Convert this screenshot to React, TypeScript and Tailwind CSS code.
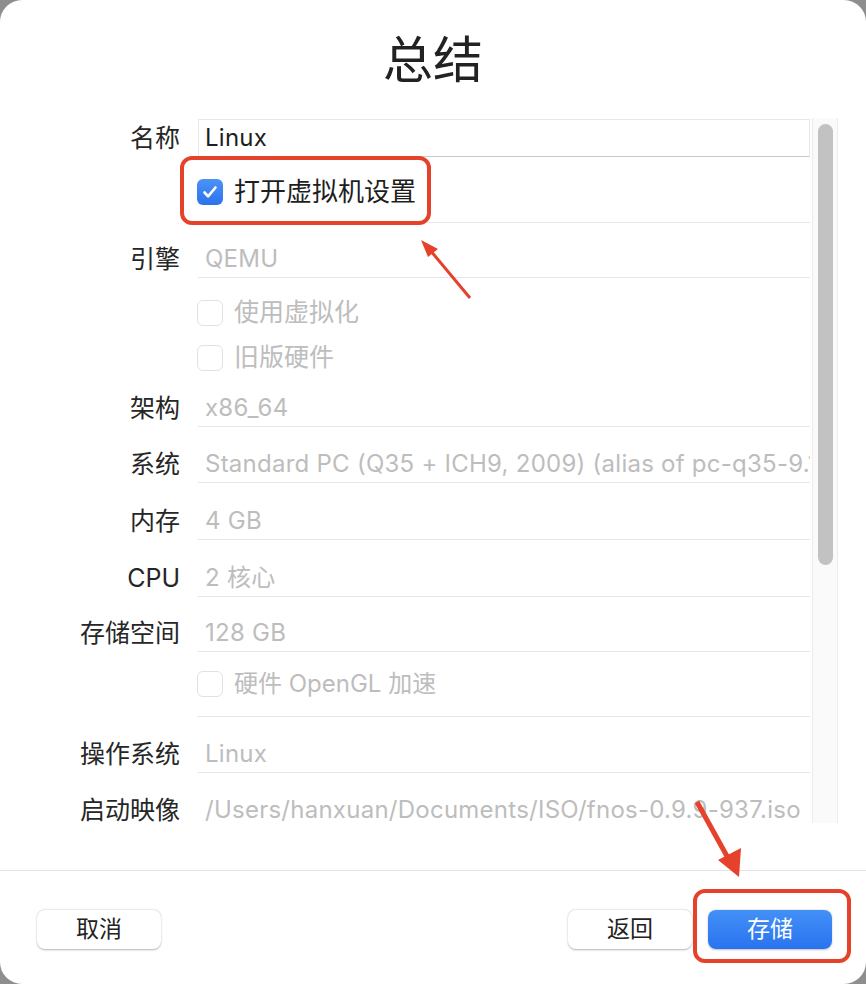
import React from "react";

const font = { fontFamily: 'Inter, "Noto Sans CJK SC", sans-serif' };

function Label({ children }: { children: React.ReactNode }) {
  return (
    <div className="w-[180px] shrink-0 text-right text-[25px] leading-none text-[#262626]">
      {children}
    </div>
  );
}

function FieldRow({ label, value, mt = "mt-[18px]" }: { label: string; value: string; mt?: string }) {
  return (
    <div className={`shrink-0 flex items-center ${mt}`}>
      <Label>{label}</Label>
      <div className="ml-[18px] w-[612px] h-[38px] border-b border-[#e6e6e6] flex items-center pl-[7px] overflow-hidden">
        <span className="text-[24px] leading-none tracking-[0.25px] text-[#bdbdbd] whitespace-nowrap">{value}</span>
      </div>
    </div>
  );
}

function EmptyBox() {
  return <div className="w-[26px] h-[26px] rounded-[6px] border border-[#e2e2e2] bg-white shrink-0" />;
}

function CheckRow({ text }: { text: string }) {
  return (
    <div className="shrink-0 flex items-center h-[45px]">
      <div className="w-[180px] shrink-0" />
      <div className="ml-[17px] flex items-center gap-[11px]">
        <EmptyBox />
        <span className="text-[25px] leading-none text-[#bdbdbd] whitespace-nowrap">{text}</span>
      </div>
    </div>
  );
}

export default function App() {
  return (
    <div className="w-[866px] h-[984px] bg-[#8e8e8e]" style={font}>
      <div className="relative w-[866px] h-[984px] bg-white rounded-[22px] flex flex-col overflow-hidden">
        {/* Title */}
        <div className="shrink-0 h-[118px] flex items-start justify-center pt-[30px]">
          <h1 className="text-[50px] leading-[60px] text-[#222]">总结</h1>
        </div>

        {/* Scroll region */}
        <div className="shrink-0 h-[705px] flex overflow-hidden">
          <div className="w-[810px] shrink-0 flex flex-col">
            {/* Name */}
            <div className="shrink-0 flex items-center mt-[1px]">
              <Label>名称</Label>
              <div className="ml-[18px] w-[612px] h-[38px] border border-[#e8e8e8] border-b-[#c9c9c9] flex items-center pl-[6px]">
                <span className="text-[24px] leading-none tracking-[0.25px] text-[#1e1e1e]">Linux</span>
              </div>
            </div>
            {/* Checked row */}
            <div className="shrink-0 flex items-center h-[66px] pt-[5px] border-b border-[#e6e6e6] ml-[198px]">
              <div className="-ml-[1px] flex items-center gap-[11px]">
                <div className="w-[26px] h-[26px] rounded-[6px] bg-gradient-to-b from-[#4b92f8] to-[#2b72ee] flex items-center justify-center">
                  <svg width="20" height="20" viewBox="0 0 20 20" fill="none">
                    <path d="M4.5 10.5l3.6 3.8L15.5 5.5" stroke="white" strokeWidth="2.6" strokeLinecap="round" strokeLinejoin="round" />
                  </svg>
                </div>
                <span className="text-[26px] leading-none text-[#1e1e1e]">打开虚拟机设置</span>
              </div>
            </div>
            <FieldRow label="引擎" value="QEMU" mt="mt-[17px]" />
            <div className="shrink-0 pt-[12px]">
              <CheckRow text="使用虚拟化" />
              <CheckRow text="旧版硬件" />
            </div>
            <FieldRow label="架构" value="x86_64" mt="mt-[9px]" />
            <FieldRow label="系统" value="Standard PC (Q35 + ICH9, 2009) (alias of pc-q35-9.1)" />
            <FieldRow label="内存" value="4 GB" mt="mt-[19px]" />
            <FieldRow label="CPU" value="2 核心" mt="mt-[19px]" />
            <FieldRow label="存储空间" value="128 GB" mt="mt-[17px]" />
            <div className="shrink-0 flex items-center h-[65px] border-b border-[#e6e6e6] ml-[197px]">
              <div className="flex items-center gap-[11px]">
                <EmptyBox />
                <span className="text-[24px] leading-none text-[#bdbdbd] whitespace-nowrap">硬件 OpenGL 加速</span>
              </div>
            </div>
            <FieldRow label="操作系统" value="Linux" />
            <FieldRow label="启动映像" value="/Users/hanxuan/Documents/ISO/fnos-0.9.9-937.iso" />
          </div>
          {/* Scrollbar */}
          <div className="ml-[2px] w-[26px] h-full bg-[#fafafa] border-x border-[#ececec] flex justify-center pt-[6px]">
            <div className="w-[15px] h-[441px] rounded-full bg-[#c2c2c2]" />
          </div>
        </div>

        {/* Footer */}
        <div className="mt-[47px] border-t border-[#e4e4e4] flex-1 flex items-start pt-[39px] pr-[34px] pl-[37px]">
          <button className="w-[124px] h-[39px] rounded-[8px] bg-white shadow-[0_0.5px_2px_rgba(0,0,0,0.3)] text-[23px] text-[#222] leading-none">
            取消
          </button>
          <div className="flex-1" />
          <button className="w-[124px] h-[39px] rounded-[8px] bg-white shadow-[0_0.5px_2px_rgba(0,0,0,0.3)] text-[23px] text-[#222] leading-none">
            返回
          </button>
          <button className="ml-[16px] w-[124px] h-[39px] rounded-[8px] bg-gradient-to-b from-[#4390f8] to-[#2a73ef] shadow-[0_0.5px_2px_rgba(0,0,0,0.25)] text-[23px] text-white leading-none">
            存储
          </button>
        </div>

        {/* Annotations */}
        <div className="absolute left-[180px] top-[156px] w-[251px] h-[69px] border-[4px] border-[#e5412b] rounded-[12px]" />
        <div className="absolute left-[693px] top-[889px] w-[158px] h-[74px] border-[4px] border-[#e5412b] rounded-[12px]" />
        <svg className="absolute left-0 top-0 pointer-events-none" width="866" height="984" viewBox="0 0 866 984">
          <line x1="470" y1="298" x2="430" y2="250" stroke="#e5412b" strokeWidth="3" />
          <polygon points="421,240 438,249 428,257" fill="#e5412b" />
          <line x1="697" y1="802" x2="728" y2="858" stroke="#e5412b" strokeWidth="5" />
          <polygon points="739,877 718,860 741,848" fill="#e5412b" />
        </svg>
      </div>
    </div>
  );
}
